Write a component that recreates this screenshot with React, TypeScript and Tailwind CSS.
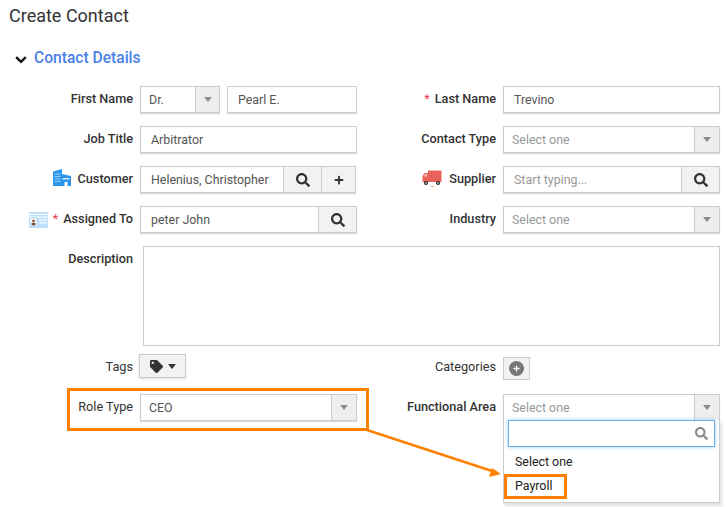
import type { ReactNode } from 'react'
import { FaPlus, FaSearch, FaTag } from 'react-icons/fa'

function Caret({ className = 'border-t-[#8a8a8a]' }: { className?: string }) {
  return <span className={`w-0 h-0 border-x-[4px] border-x-transparent border-t-[5px] ${className}`} />
}

function Star() {
  return <span className="text-[#e8404a] font-normal mr-[5px]">*</span>
}

function SelectBox({ value, placeholder }: { value?: string; placeholder?: string }) {
  return (
    <div className="w-[217px] h-[27px] flex border border-[#cccccc] shadow-[0_1px_1px_rgba(0,0,0,0.15)] bg-white">
      <div className={`flex-1 pl-[8px] leading-[26px] ${value ? 'text-[#555]' : 'text-[#999]'}`}>{value ?? placeholder}</div>
      <div className="w-[25px] flex items-center justify-center bg-[#eeeeee] border-l border-[#cccccc]">
        <Caret />
      </div>
    </div>
  )
}

function TextBox({ value, w = 'w-[217px]' }: { value: string; w?: string }) {
  return <div className={`${w} h-[27px] border border-[#cccccc] shadow-[0_1px_1px_rgba(0,0,0,0.15)] bg-white pl-[10px] leading-[26px] text-[#555]`}>{value}</div>
}

function LookupBox({ value, placeholder, plus }: { value?: string; placeholder?: string; plus?: boolean }) {
  return (
    <div className={`${plus ? 'w-[216px]' : 'w-[217px]'} h-[27px] flex border border-[#cccccc] shadow-[0_1px_1px_rgba(0,0,0,0.15)] bg-white`}>
      <div className={`flex-1 pl-[10px] leading-[26px] ${value ? 'text-[#555]' : 'text-[#999]'}`}>{value ?? placeholder}</div>
      <div className="w-[38px] flex items-center justify-center bg-[#f2f2f2] border-l border-[#cccccc] text-[#333]">
        <FaSearch size={14} />
      </div>
      {plus && (
        <div className="w-[34px] flex items-center justify-center bg-[#f2f2f2] border-l border-[#cccccc] text-[#333]">
          <FaPlus size={10} />
        </div>
      )}
    </div>
  )
}

function Field({ label, icon, star, children, bold = true }: { label: string; icon?: ReactNode; star?: boolean; children: ReactNode; bold?: boolean }) {
  return (
    <div className="w-[363px] flex items-start">
      <div className={`w-[133px] h-[25px] flex items-center justify-end text-[12.7px] text-[#333] ${bold ? 'font-medium' : ''}`}>
        {icon}
        {star && <Star />}
        {label}
      </div>
      <div className="ml-[7px]">{children}</div>
    </div>
  )
}

function BuildingIcon() {
  return (
    <svg width="18" height="17" viewBox="0 0 18 17" className="mr-[7px] mb-[3px]">
      <path d="M0 17V2.5L9 0v5l9 2v10z" fill="#2c96ea" />
      <path d="M1.5 5h6M1.5 7.5h6M1.5 10h6M1.5 12.5h6" stroke="#a8d6f8" strokeWidth="0.9" />
      <rect x="9.5" y="9" width="7" height="1.5" fill="#d5ebfc" />
      <rect x="11.5" y="13" width="3" height="4" fill="#fff" />
    </svg>
  )
}

function CardIcon() {
  return (
    <svg width="19" height="16" viewBox="0 0 19 16" className="mr-[5px] mt-[2px]">
      <rect x="0" y="0" width="19" height="16" fill="#bfe0fa" />
      <path d="M0 2.5h19M0 5h19" stroke="#fff" strokeWidth="1" />
      <rect x="1" y="6" width="7" height="8.5" fill="#fff" stroke="#8cc8f2" strokeWidth="0.6" />
      <circle cx="4.5" cy="9" r="1.6" fill="#a5654a" />
      <rect x="2.5" y="11" width="4" height="2.4" fill="#6b5148" />
      <path d="M10 8h8M10 11h8" stroke="#fff" strokeWidth="1.2" />
    </svg>
  )
}

function TruckIcon() {
  return (
    <svg width="20" height="17" viewBox="0 0 20 17" className="mr-[7px]">
      <path d="M6 0.5h13.5v11.5H0.5V6l2-3H6z" fill="#e8635a" />
      <path d="M2.8 4h2.4v2.5H1.6z" fill="#f6b5ae" />
      <circle cx="4" cy="13" r="2" fill="#222" />
      <circle cx="4" cy="13" r="0.8" fill="#fff" />
      <circle cx="16" cy="13" r="2" fill="#222" />
      <circle cx="16" cy="13" r="0.8" fill="#fff" />
      <rect x="9" y="16" width="3" height="1" fill="#f5a65b" />
    </svg>
  )
}

export default function App() {
  return (
    <div className="relative w-[726px] h-[507px] overflow-hidden bg-white text-[12.4px] font-['Roboto','Liberation_Sans',sans-serif]">
      <h1 className="pl-[9px] pt-[4px] h-[27px] text-[18px] leading-[23px] text-[#333]">Create Contact</h1>

      <div className="flex items-center h-[20px] mt-[22px] pl-[15px]">
        <svg width="12" height="8" viewBox="0 0 12 8" className="mt-[2px]">
          <path d="M1.2 1.2 L6 5.8 L10.8 1.2" stroke="#111" strokeWidth="2.4" fill="none" />
        </svg>
        <span className="ml-[7px] text-[15.6px] font-medium text-[#4a80e8]">Contact Details</span>
      </div>

      <div className="mt-[17px] flex flex-col gap-y-[13px]">
        <div className="flex">
          <Field label="First Name">
            <div className="flex gap-[7px]">
              <div className="w-[80px] h-[27px] flex border border-[#cccccc] shadow-[0_1px_1px_rgba(0,0,0,0.15)] bg-white">
                <div className="flex-1 pl-[8px] leading-[26px] text-[#555]">Dr.</div>
                <div className="w-[24px] flex items-center justify-center bg-[#eeeeee] border-l border-[#cccccc]"><Caret /></div>
              </div>
              <TextBox value="Pearl E." w="w-[130px]" />
            </div>
          </Field>
          <Field label="Last Name" star><TextBox value="Trevino" /></Field>
        </div>

        <div className="flex">
          <Field label="Job Title"><TextBox value="Arbitrator" /></Field>
          <Field label="Contact Type"><SelectBox placeholder="Select one" /></Field>
        </div>

        <div className="flex">
          <Field label="Customer" icon={<BuildingIcon />}><LookupBox value="Helenius, Christopher" plus /></Field>
          <Field label="Supplier" icon={<TruckIcon />}><LookupBox placeholder="Start typing..." /></Field>
        </div>

        <div className="flex">
          <Field label="Assigned To" icon={<CardIcon />} star><LookupBox value="peter John" /></Field>
          <Field label="Industry"><SelectBox placeholder="Select one" /></Field>
        </div>

        <div className="flex items-start">
          <div className="w-[133px] h-[25px] flex items-center justify-end text-[12.7px] font-medium text-[#333]">Description</div>
          <div className="ml-[10px] w-[577px] h-[100px] border border-[#cccccc] bg-white" />
        </div>
      </div>

      <div className="mt-[8px] flex">
        <div className="w-[363px] flex items-start">
          <div className="w-[133px] h-[25px] flex items-center justify-end text-[12.7px] text-[#333]">Tags</div>
          <div className="ml-[6px] w-[47px] h-[24px] flex items-center justify-center gap-[5px] bg-[#f2f2f2] border border-[#cccccc] shadow-sm text-[#333]">
            <FaTag size={13} />
            <Caret className="border-t-[#333]" />
          </div>
        </div>
        <div className="w-[363px] flex items-start">
          <div className="w-[133px] h-[25px] flex items-center justify-end text-[12.7px] text-[#333]">Categories</div>
          <div className="ml-[7px] mt-[3px] w-[27px] h-[23px] flex items-center justify-center bg-[#f2f2f2] border border-[#cccccc]">
            <span className="w-[15px] h-[15px] rounded-full bg-[#777] flex items-center justify-center text-white"><FaPlus size={7} /></span>
          </div>
        </div>
      </div>

      <div className="mt-[14px] flex">
        <Field label="Role Type" bold={false}><SelectBox value="CEO" /></Field>
        <Field label="Functional Area"><SelectBox placeholder="Select one" /></Field>
      </div>

      {/* open dropdown */}
      <div className="absolute left-[503px] top-[420px] w-[217px] h-[83px] bg-white border border-t-0 border-[#cccccc] shadow-[2px_3px_3px_rgba(0,0,0,0.12)] px-[4px]">
        <div className="h-[27px] flex items-center justify-end pr-[6px] bg-white border border-[#66afe9] shadow-[0_0_4px_rgba(102,175,233,0.6)] text-[#888]">
          <FaSearch size={13} />
        </div>
        <div className="mt-[3px] h-[24px] leading-[24px] pl-[7px] text-[#222]">Select one</div>
        <div className="h-[24px] leading-[24px] pl-[7px] text-[#222]">Payroll</div>
      </div>

      {/* annotation */}
      <div className="absolute left-[67px] top-[388px] w-[302px] h-[43px] border-[3px] border-[#ff8000]" />
      <div className="absolute left-[504px] top-[474px] w-[63px] h-[25px] border-[3px] border-[#ff8000]" />
      <svg className="absolute left-[365px] top-[428px]" width="140" height="50" viewBox="0 0 140 50">
        <path d="M2 2 L130 44" stroke="#ff8000" strokeWidth="2.5" fill="none" />
        <path d="M136 46 L127 40 L124 49z" fill="#ff8000" />
      </svg>
    </div>
  )
}
